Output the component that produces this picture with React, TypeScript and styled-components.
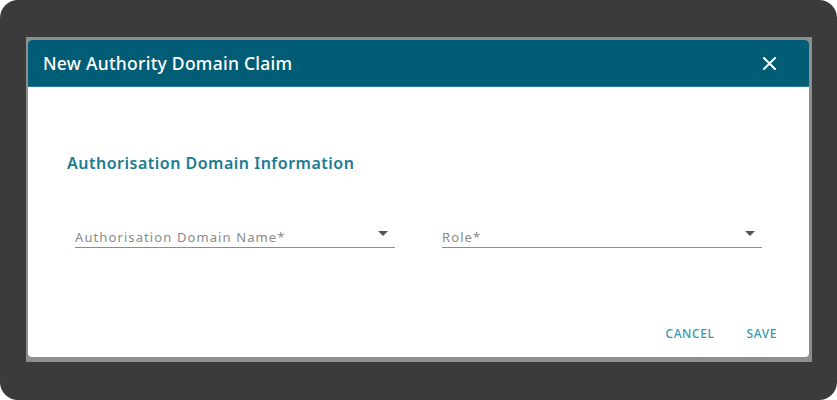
import React from "react";
import styled, { createGlobalStyle } from "styled-components";

const Global = createGlobalStyle`
  html, body { margin: 0; padding: 0; background: #ffffff; }
  body { font-family: "Noto Sans", "Open Sans", sans-serif; }
`;

const Screen = styled.div`
  width: 837px;
  height: 400px;
  box-sizing: border-box;
  background: #3b3b3b;
  border-radius: 18px;
  padding: 37px 0 0 26px;
`;

const Frame = styled.div`
  width: 786px;
  height: 325px;
  box-sizing: border-box;
  background: #8e8e8e;
  padding: 3px 3px 5px 2px;
`;

const Dialog = styled.div`
  height: 100%;
  background: #ffffff;
  border-radius: 4px;
  overflow: hidden;
  display: flex;
  flex-direction: column;
`;

const Header = styled.div`
  height: 47px;
  box-sizing: border-box;
  background: #005d75;
  border-bottom: 1px solid #2a7f94;
  display: flex;
  align-items: center;
  justify-content: space-between;
  padding: 0 32px 0 15px;
`;

const Title = styled.h1`
  margin: 0;
  font-family: "Noto Sans", sans-serif;
  font-size: 17.5px;
  font-weight: 500;
  color: #ffffff;
  letter-spacing: 0.25px;
`;

const CloseButton = styled.button`
  border: 0;
  background: transparent;
  padding: 0;
  width: 16px;
  height: 16px;
  display: flex;
  align-items: center;
  justify-content: center;
  cursor: pointer;
`;

const Body = styled.div`
  flex: 1;
  display: flex;
  flex-direction: column;
  padding: 66px 47px 0 39px;
`;

const SectionTitle = styled.h2`
  margin: 0;
  font-family: "Noto Sans", sans-serif;
  font-size: 16px;
  font-weight: 600;
  color: #1b7c92;
  line-height: 20px;
  letter-spacing: 0.5px;
`;

const FieldRow = styled.div`
  display: grid;
  grid-template-columns: 320px 320px;
  column-gap: 47px;
  margin: 47px 0 0 8px;
`;

const Select = styled.div`
  height: 28px;
  box-sizing: border-box;
  border-bottom: 1px solid #8c8c8c;
  display: flex;
  align-items: center;
  justify-content: space-between;
  padding: 0 7px 0 0;
`;

const Label = styled.span`
  font-family: "Noto Sans", sans-serif;
  font-size: 13px;
  color: #8a8a8a;
  padding-top: 6px;
  letter-spacing: 1.1px;
`;

const Footer = styled.div`
  display: flex;
  justify-content: flex-end;
  align-items: center;
  gap: 16px;
  padding: 0 24px 9px 0;
`;

const TextButton = styled.button`
  border: 0;
  background: transparent;
  font-family: "Noto Sans", sans-serif;
  font-size: 12px;
  font-weight: 500;
  color: #3a98ad;
  padding: 6px 8px;
  line-height: 16px;
  letter-spacing: 0.6px;
  cursor: pointer;
`;

const Arrow = () => (
  <svg width="10" height="5" viewBox="0 0 10 5">
    <path d="M0 0 L10 0 L5 5 Z" fill="#555" />
  </svg>
);

const SelectField = ({ label }: { label: string }) => (
  <Select>
    <Label>{label}</Label>
    <Arrow />
  </Select>
);

export default function App() {
  return (
    <>
      <Global />
      <Screen>
        <Frame>
          <Dialog>
            <Header>
              <Title>New Authority Domain Claim</Title>
              <CloseButton aria-label="close">
                <svg width="13" height="13" viewBox="0 0 13 13">
                  <path d="M1 1 L12 12 M12 1 L1 12" stroke="#ffffff" strokeWidth="2" strokeLinecap="square" />
                </svg>
              </CloseButton>
            </Header>
            <Body>
              <SectionTitle>Authorisation Domain Information</SectionTitle>
              <FieldRow>
                <SelectField label="Authorisation Domain Name*" />
                <SelectField label="Role*" />
              </FieldRow>
            </Body>
            <Footer>
              <TextButton>CANCEL</TextButton>
              <TextButton>SAVE</TextButton>
            </Footer>
          </Dialog>
        </Frame>
      </Screen>
    </>
  );
}
